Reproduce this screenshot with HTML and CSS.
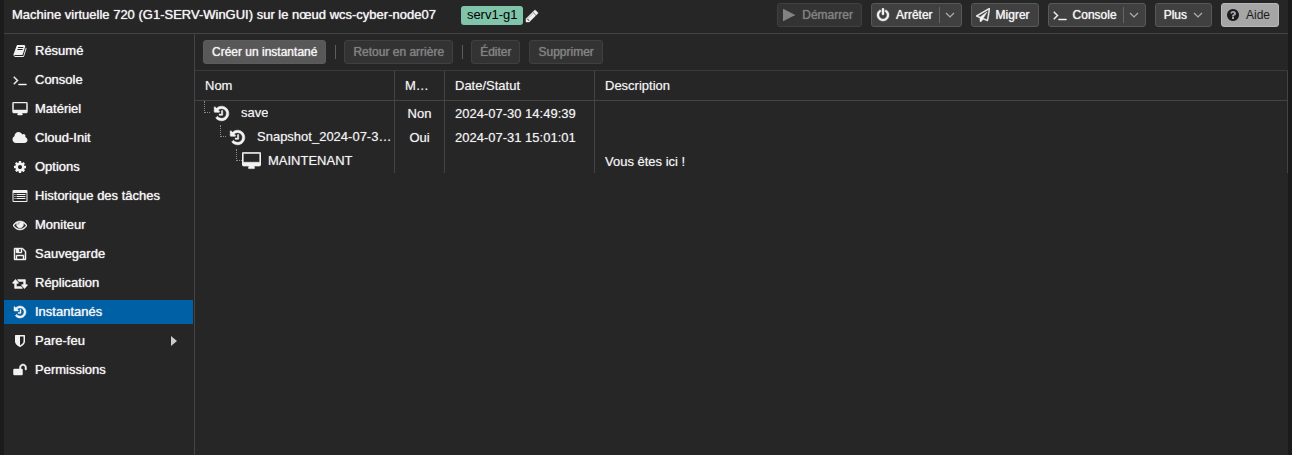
FILE: index.html
```html
<!DOCTYPE html>
<html lang="fr">
<head>
<meta charset="utf-8">
<title>Machine virtuelle 720</title>
<link rel="stylesheet" href="styles.css">
</head>
<body>
<svg class="sprite" aria-hidden="true">
<symbol id="i-book" viewBox="0 0 1792 1792"><path d="M1703 478q40 57 18 129l-275 906q-19 64-76.500 107.500t-122.500 43.500h-923q-77 0-148.500-53.500t-99.500-131.500q-24-67-2-127 0-4 3-27t4-37q1-8-3-21.500t-3-19.500q2-11 8-21t16.500-23.500 16.500-23.500q23-38 45-91.500t30-91.500q3-10 .5-30t-.5-28q3-11 17-28t17-23q21-36 42-92t25-90q1-9-2.500-32t.5-28q4-13 22-30.500t22-22.500q19-26 42.500-84.500t27.500-96.500q1-8-3-25.500t-2-26.500q2-8 9-18t18-23 17-21q8-12 16.500-30.500t15-35 16-36 19.500-32 26.500-23.500 36-11.500 47.500 5.500l-1 3q38-9 51-9h761q74 0 114 56t18 130l-274 906q-36 119-71.500 153.500t-128.500 34.500h-869q-27 0-38 15-11 16-1 43 24 70 144 70h923q29 0 56-15.500t35-41.500l300-987q7-22 5-57 38 15 59 43zm-1064 2q-4 13 2 22.500t20 9.500h608q13 0 25.500-9.500t16.500-22.500l21-64q4-13-2-22.500t-20-9.500h-608q-13 0-25.500 9.500t-16.500 22.500zm-83 256q-4 13 2 22.500t20 9.500h608q13 0 25.500-9.500t16.500-22.500l21-64q4-13-2-22.500t-20-9.500h-608q-13 0-25.500 9.500t-16.500 22.500z"/></symbol>
<symbol id="i-terminal" viewBox="0 0 1792 1792"><path class="heavy" d="M649 983l-466 466q-10 10-23 10t-23-10l-50-50q-10-10-10-23t10-23l393-393-393-393q-10-10-10-23t10-23l50-50q10-10 23-10t23 10l466 466q10 10 10 23t-10 23zm1079 457v64q0 14-9 23t-23 9h-960q-14 0-23-9t-9-23v-64q0-14 9-23t23-9h960q14 0 23 9t9 23z"/></symbol>
<symbol id="i-desktop" viewBox="-64 0 1920 1792"><path class="heavy" d="M1728 992v-832q0-13-9.500-22.500t-22.500-9.500h-1600q-13 0-22.500 9.500t-9.500 22.500v832q0 13 9.500 22.500t22.500 9.500h1600q13 0 22.500-9.500t9.500-22.500zm128-832v1088q0 66-47 113t-113 47h-544q0 37 16 77.500t32 71 16 43.500q0 26-19 45t-45 19h-512q-26 0-45-19t-19-45q0-14 16-44t32-70 16-78h-544q-66 0-113-47t-47-113v-1088q0-66 47-113t113-47h1600q66 0 113 47t47 113z"/></symbol>
<symbol id="i-cloud" viewBox="-64 0 1920 1792"><path d="M1856 1152q0 159-112.500 271.500t-271.500 112.500h-1088q-185 0-316.500-131.500t-131.500-316.500q0-132 71-241.500t187-163.500q-2-28-2-43 0-212 150-362t362-150q158 0 286.500 88t187.500 230q70-62 166-62 106 0 181 75t75 181q0 75-41 138 129 30 213 134.500t84 239.500z"/></symbol>
<symbol id="i-cog" viewBox="0 0 1792 1792"><path d="M1152 896q0-106-75-181t-181-75-181 75-75 181 75 181 181 75 181-75 75-181zm512-109v222q0 12-8 23t-20 13l-185 28q-19 54-39 91 35 50 107 138 10 12 10 25t-9 23q-27 37-99 108t-94 71q-12 0-26-9l-138-108q-44 23-91 38-16 136-29 186-7 28-36 28h-222q-14 0-24.500-8.500t-11.500-21.500l-28-184q-49-16-90-37l-141 107q-10 9-25 9-14 0-25-11-126-114-165-168-7-10-7-23 0-12 8-23 15-21 51-66.500t54-70.500q-27-50-41-99l-183-27q-13-2-21-12.500t-8-23.500v-222q0-12 8-23t19-13l186-28q14-46 39-92-40-57-107-138-10-12-10-24 0-10 9-23 26-36 98.500-107.500t94.500-71.500q13 0 26 10l138 107q44-23 91-38 16-136 29-186 7-28 36-28h222q14 0 24.500 8.500t11.500 21.500l28 184q49 16 90 37l142-107q9-9 24-9 13 0 25 10 129 119 165 170 7 8 7 22 0 12-8 23-15 21-51 66.500t-54 70.500q26 50 41 98l183 28q13 2 21 12.500t8 23.500z"/></symbol>
<symbol id="i-list" viewBox="0 0 15 14"><path fill-rule="evenodd" d="M1 1h13a1 1 0 0 1 1 1v10a1 1 0 0 1-1 1H1a1 1 0 0 1-1-1V2a1 1 0 0 1 1-1zM1 4v8h13V4zM2 5h1v1H2zM4 5h9v1H4zM2 7h1v1H2zM4 7h9v1H4zM2 9h1v1H2zM4 9h9v1H4z"/></symbol>
<symbol id="i-eye" viewBox="0 0 1792 1792"><path class="heavy" d="M1664 960q-152-236-381-353 61 104 61 225 0 185-131.500 316.500t-316.500 131.500-316.500-131.500-131.500-316.500q0-121 61-225-229 117-381 353 133 205 333.500 326.500t434.500 121.500 434.500-121.500 333.500-326.500zm-720-384q0-20-14-34t-34-14q-125 0-214.500 89.500t-89.500 214.500q0 20 14 34t34 14 34-14 14-34q0-86 61-147t147-61q20 0 34-14t14-34zm848 384q0 34-20 69-140 230-376.500 368.500t-499.500 138.500-499.500-139-376.500-368q-20-35-20-69t20-69q140-229 376.500-368t499.500-139 499.500 139 376.500 368q20 35 20 69z"/></symbol>
<symbol id="i-save" viewBox="0 0 1792 1792"><path class="heavy" d="M512 1536h768v-384h-768v384zm896 0h128v-896q0-14-10-38.500t-20-34.500l-281-281q-10-10-34-20t-39-10v416q0 40-28 68t-68 28h-576q-40 0-68-28t-28-68v-416h-128v1280h128v-416q0-40 28-68t68-28h832q40 0 68 28t28 68v416zm-384-928v-320q0-13-9.500-22.500t-22.500-9.500h-192q-13 0-22.500 9.500t-9.500 22.500v320q0 13 9.500 22.500t22.500 9.500h192q13 0 22.500-9.500t9.500-22.500zm640 32v928q0 40-28 68t-68 28h-1344q-40 0-68-28t-28-68v-1344q0-40 28-68t68-28h928q40 0 88 20t76 48l280 280q28 28 48 76t20 88z"/></symbol>
<symbol id="i-retweet" viewBox="-64 0 1920 1792"><path class="heavy" d="M1216 1568q0 13-9.500 22.500t-22.500 9.500h-960q-8 0-13.500-2t-9-7-5.500-8-3-11.500-1-11.500v-600h-192q-26 0-45-19t-19-45q0-24 15-41l320-384q19-22 49-22t49 22l320 384q15 17 15 41 0 26-19 45t-45 19h-192v384h576q16 0 25 11l160 192q7 10 7 21zm640-416q0 24-15 41l-320 384q-20 23-49 23t-49-23l-320-384q-15-17-15-41 0-26 19-45t45-19h192v-384h-576q-16 0-25-12l-160-192q-7-9-7-20 0-13 9.500-22.500t22.500-9.500h960q8 0 13.500 2t9 7 5.500 8 3 11.500 1 11.500v600h192q26 0 45 19t19 45z"/></symbol>
<symbol id="i-history" viewBox="0 0 1792 1792"><path class="heavy" d="M1664 896q0 156-61 298t-164 245-245 164-298 61q-172 0-327-72.500t-264-204.500q-7-10-6.500-22.500t8.500-20.500l137-138q10-9 25-9 16 2 23 12 73 95 179 147t225 52q104 0 198.500-40.500t163.500-109.500 109.500-163.500 40.500-198.500-40.500-198.500-109.500-163.500-163.500-109.500-198.500-40.500q-98 0-188 35.500t-160 101.500l137 138q31 30 14 69-17 40-59 40h-448q-26 0-45-19t-19-45v-448q0-42 40-59 39-17 69 14l130 129q107-101 244.500-156.500t284.500-55.500q156 0 298 61t245 164 164 245 61 298zm-640-288v448q0 14-9 23t-23 9h-320q-14 0-23-9t-9-23v-64q0-14 9-23t23-9h224v-352q0-14 9-23t23-9h64q14 0 23 9t9 23z"/></symbol>
<symbol id="i-shield" viewBox="0 0 1792 1792"><path d="M1344 960v-640h-448v1137q119-63 213-137 235-184 235-360zm192-768v768q0 86-33.500 170.500t-83 150-118 127.500-126.500 103-121 77.500-89.500 49.500-42.500 20q-12 6-26 6t-26-6q-16-7-42.500-20t-89.500-49.500-121-77.500-126.500-103-118-127.500-83-150-33.500-170.500v-768q0-26 19-45t45-19h1152q26 0 45 19t19 45z"/></symbol>
<symbol id="i-unlock" viewBox="0 0 1792 1792"><path class="heavy" d="M1728 576v256q0 26-19 45t-45 19h-64q-26 0-45-19t-19-45v-256q0-106-75-181t-181-75-181 75-75 181v192h96q40 0 68 28t28 68v576q0 40-28 68t-68 28h-960q-40 0-68-28t-28-68v-576q0-40 28-68t68-28h672v-192q0-185 131.500-316.500t316.500-131.500 316.500 131.500 131.500 316.500z"/></symbol>
<symbol id="i-pencil" viewBox="0 0 1792 1792"><path class="heavy" d="M491 1536l91-91-235-235-91 91v107h128v128h107zm523-928q0-22-22-22-10 0-17 7l-542 542q-7 7-7 17 0 22 22 22 10 0 17-7l542-542q7-7 7-17zm-54-192l416 416-832 832h-416v-416zm683 96q0 53-37 90l-166 166-416-416 166-165q36-38 90-38 53 0 91 38l235 234q37 39 37 91z"/></symbol>
<symbol id="i-power" viewBox="0 0 1792 1792"><path class="heavy" d="M1664 896q0 156-61 298t-164 245-245 164-298 61-298-61-245-164-164-245-61-298q0-182 80.500-343t226.500-270q43-32 95.500-25t83.500 50q32 42 24.500 94.500t-49.500 84.500q-98 74-151.500 181t-53.500 228q0 104 40.500 198.500t109.500 163.500 163.500 109.500 198.500 40.500 198.500-40.500 163.500-109.500 109.500-163.500 40.500-198.500q0-121-53.500-228t-151.500-181q-42-32-49.500-84.500t24.500-94.500q31-43 84-50t95 25q146 109 226.500 270t80.500 343zm-640-768v640q0 52-38 90t-90 38-90-38-38-90v-640q0-52 38-90t90-38 90 38 38 90z"/></symbol>
<symbol id="i-plane" viewBox="0 0 1792 1792"><path class="heavy" d="M1764 11q33 24 27 64l-256 1536q-5 29-32 45-14 8-31 8-11 0-24-5l-527-215-298 327q-18 21-47 21-14 0-23-4-19-7-30-23.500t-11-36.500v-452l-472-193q-37-14-40-55-3-39 32-59l1664-960q35-21 68 2zm-342 1499l221-1323-1434 827 336 137 863-639-478 797z"/></symbol>
<symbol id="i-help" viewBox="0 0 1792 1792"><path d="M1024 1376v-192q0-14-9-23t-23-9h-192q-14 0-23 9t-9 23v192q0 14 9 23t23 9h192q14 0 23-9t9-23zm256-672q0-88-55.500-163t-138.500-116-170-41q-243 0-371 213-15 24 8 42l132 100q7 6 19 6 16 0 25-12 53-68 86-92 34-24 86-24 48 0 85.500 26t37.500 59q0 38-20 61t-68 45q-63 28-115.500 86.500t-52.500 125.500v36q0 14 9 23t23 9h192q14 0 23-9t9-23q0-19 21.500-49.500t54.500-49.500q32-18 49-28.500t46-35 44.500-48 28-60.500 12.500-81zm384 192q0 209-103 385.500t-279.500 279.500-385.500 103-385.500-103-279.500-279.500-103-385.500 103-385.500 279.500-279.500 385.500-103 385.500 103 279.500 279.500 103 385.500z"/></symbol>
<symbol id="i-play" viewBox="0 0 14 14"><path d="M1 1.200v11.600q0 .6.600.3L12.800 7.300q.5-.3 0-.6L1.600.9Q1 .6 1 1.200z"/></symbol>
<symbol id="i-chevron" viewBox="0 0 10 10"><path d="M1 3l4 4 4-4" fill="none" stroke="currentColor" stroke-width="1.200"/></symbol>
<symbol id="i-caret" viewBox="0 0 6 10"><path d="M0 0l6 5-6 5z"/></symbol>
</svg>

<div class="app">
  <header class="topbar">
    <h1 class="title">Machine virtuelle 720 (G1-SERV-WinGUI) sur le nœud wcs-cyber-node07</h1>
    <span class="tag">serv1-g1</span>
    <button class="edit-tags" type="button" aria-label="Modifier les étiquettes"><svg class="icon"><use href="#i-pencil"/></svg></button>
    <div class="actions">
      <button class="btn with-icon" type="button" disabled><svg class="icon"><use href="#i-play"/></svg>Démarrer</button>
      <button class="btn with-icon" type="button"><svg class="icon"><use href="#i-power"/></svg>Arrêter<span class="split"><svg class="chevron"><use href="#i-chevron"/></svg></span></button>
      <button class="btn with-icon" type="button"><svg class="icon"><use href="#i-plane"/></svg>Migrer</button>
      <button class="btn with-icon" type="button"><svg class="icon"><use href="#i-terminal"/></svg>Console<span class="split"><svg class="chevron"><use href="#i-chevron"/></svg></span></button>
      <button class="btn menu" type="button">Plus<svg class="chevron"><use href="#i-chevron"/></svg></button>
      <button class="btn with-icon help" type="button"><svg class="icon"><use href="#i-help"/></svg>Aide</button>
    </div>
  </header>

  <div class="body">
    <nav class="sidebar">
      <a class="item" href="#resume"><svg class="icon"><use href="#i-book"/></svg>Résumé</a>
      <a class="item" href="#console"><svg class="icon"><use href="#i-terminal"/></svg>Console</a>
      <a class="item" href="#materiel"><svg class="icon wide"><use href="#i-desktop"/></svg>Matériel</a>
      <a class="item" href="#cloud-init"><svg class="icon wide"><use href="#i-cloud"/></svg>Cloud-Init</a>
      <a class="item" href="#options"><svg class="icon"><use href="#i-cog"/></svg>Options</a>
      <a class="item" href="#historique"><svg class="icon wide"><use href="#i-list"/></svg>Historique des tâches</a>
      <a class="item" href="#moniteur"><svg class="icon"><use href="#i-eye"/></svg>Moniteur</a>
      <a class="item" href="#sauvegarde"><svg class="icon"><use href="#i-save"/></svg>Sauvegarde</a>
      <a class="item" href="#replication"><svg class="icon wide"><use href="#i-retweet"/></svg>Réplication</a>
      <a class="item selected" href="#instantanes" aria-current="page"><svg class="icon"><use href="#i-history"/></svg>Instantanés</a>
      <a class="item" href="#pare-feu"><svg class="icon"><use href="#i-shield"/></svg>Pare-feu<svg class="caret"><use href="#i-caret"/></svg></a>
      <a class="item" href="#permissions"><svg class="icon"><use href="#i-unlock"/></svg>Permissions</a>
    </nav>

    <main class="panel">
      <div class="toolbar">
        <button class="btn primary" type="button">Créer un instantané</button>
        <span class="sep"></span>
        <button class="btn" type="button" disabled>Retour en arrière</button>
        <span class="sep"></span>
        <button class="btn" type="button" disabled>Éditer</button>
        <button class="btn" type="button" disabled>Supprimer</button>
      </div>
      <table class="grid">
        <colgroup><col class="c-name"><col class="c-ram"><col class="c-date"><col></colgroup>
        <thead>
          <tr><th scope="col">Nom</th><th scope="col">M…</th><th scope="col">Date/Statut</th><th scope="col">Description</th></tr>
        </thead>
        <tbody>
          <tr><td class="name"><div class="node"><span class="elbow"></span><svg class="tree-icon"><use href="#i-history"/></svg><span class="label">save</span></div></td><td class="ram">Non</td><td>2024-07-30 14:49:39</td><td></td></tr>
          <tr><td class="name"><div class="node depth-1"><span class="elbow"></span><svg class="tree-icon"><use href="#i-history"/></svg><span class="label">Snapshot_2024-07-3…</span></div></td><td class="ram">Oui</td><td>2024-07-31 15:01:01</td><td></td></tr>
          <tr><td class="name"><div class="node depth-2"><span class="elbow"></span><svg class="tree-icon screen"><use href="#i-desktop"/></svg><span class="label">MAINTENANT</span></div></td><td class="ram"></td><td></td><td>Vous êtes ici !</td></tr>
        </tbody>
      </table>
    </main>
  </div>
</div>
</body>
</html>
```

FILE: styles.css
```css
* { box-sizing: border-box; }

body {
  margin: 0;
  background: #1b1b1b;
  color: #f2f2f2;
  font: 13px/16px "Liberation Sans", Arial, sans-serif;
}

button { font: inherit; color: inherit; margin: 0; }

svg { fill: currentColor; flex: none; }

.sprite { display: none; }

.heavy { stroke: currentColor; stroke-width: 60; }

.app {
  display: flex;
  flex-direction: column;
  min-height: 100vh;
  margin: 0 4px;
  background: #262626;
}

/* Header */
.topbar {
  display: flex;
  align-items: center;
  height: 34px;
  padding: 0 9px 4px 8px;
  border-bottom: 1px solid #444;
}

.title {
  margin: 0 25px 0 0;
  font-size: 13px;
  font-weight: 400;
  white-space: nowrap;
  text-shadow: 0 0 1px #fff;
}

.tag {
  margin-top: 2px;
  padding: 1px 6px 2px;
  border-radius: 3px;
  background: #80c4aa;
  color: #000;
}

.edit-tags {
  display: flex;
  padding: 0;
  margin: 2px 0 0 2px;
  border: 0;
  background: none;
}

.icon { width: 14px; height: 14px; }

.actions {
  display: flex;
  gap: 9px;
  margin-left: auto;
}

.btn {
  display: flex;
  align-items: center;
  height: 24px;
  padding: 0 8px;
  border: 1px solid #585858;
  border-radius: 3px;
  background: #404040;
  font-size: 12px;
  white-space: nowrap;
  text-shadow: 0 0 1px #fff;
}

.btn.with-icon { gap: 6px; padding-left: 4px; }

.btn:disabled {
  border-color: #404040;
  background: #333;
  color: #828282;
  text-shadow: 0 0 1px #828282;
}

.split {
  display: flex;
  align-items: center;
  height: 16px;
  padding-left: 5px;
  margin-right: -2px;
  border-left: 1px solid #666;
}

.chevron { width: 10px; height: 10px; color: #b0b0b0; }

.btn.menu { gap: 6px; }

.btn.help {
  border-color: #b8b8b8;
  background: #a6a6a6;
  color: #1c1c1c;
  text-shadow: none;
}

.btn.primary { border-color: #5c5c5c; background: #585858; }

/* Body */
.body { display: flex; flex: 1; }

.sidebar {
  display: flex;
  flex-direction: column;
  gap: 5px;
  width: 191px;
  flex: none;
  padding: 5px 1px 5px 0;
  border-right: 1px solid #444;
}

.item {
  display: flex;
  align-items: center;
  gap: 8px;
  height: 24px;
  padding: 0 16px 0 9px;
  color: inherit;
  text-decoration: none;
  text-shadow: 0 0 1px #fff;
}

.item.selected { background: #0060a6; }

.item .wide { width: 16px; margin: 0 -1px; }

.caret { width: 6px; height: 10px; margin-left: auto; color: #ccc; }

.panel { flex: 1; min-width: 0; }

.toolbar {
  display: flex;
  align-items: center;
  gap: 9px;
  height: 36px;
  padding: 0 8px;
}

.sep { width: 1px; height: 14px; margin-right: -1px; background: #5c5c5c; }

/* Snapshot tree */
.grid {
  width: 100%;
  table-layout: fixed;
  border-collapse: separate;
  border-spacing: 0;
  border-top: 1px solid #3a3a3a;
  text-shadow: 0 0 1px #999;
}

.c-name { width: 200px; }
.c-ram { width: 50px; }
.c-date { width: 150px; }

.grid th, .grid td {
  padding: 0 10px;
  border-right: 1px solid #444;
  text-align: left;
  font-weight: 400;
  white-space: nowrap;
}

.grid th { height: 30px; border-bottom: 1px solid #444; }

.grid td { height: 24px; padding-top: 2px; }

.grid td.name { padding: 0; }

.grid td.ram { padding: 2px 0 0; text-align: center; }

.node {
  display: flex;
  align-items: center;
  height: 24px;
  padding-left: 9px;
}

.depth-1 { padding-left: 25px; }
.depth-2 { padding-left: 41px; }

.elbow {
  align-self: flex-start;
  width: 6px;
  height: 12px;
  border-left: 1px dotted #888;
  border-bottom: 1px dotted #888;
}

.tree-icon { width: 17px; height: 17px; margin: 0 11px 0 3px; }

.tree-icon.screen { width: 19px; height: 18px; margin: 0 7px 0 0; }

.label { overflow: hidden; text-overflow: ellipsis; }
```
